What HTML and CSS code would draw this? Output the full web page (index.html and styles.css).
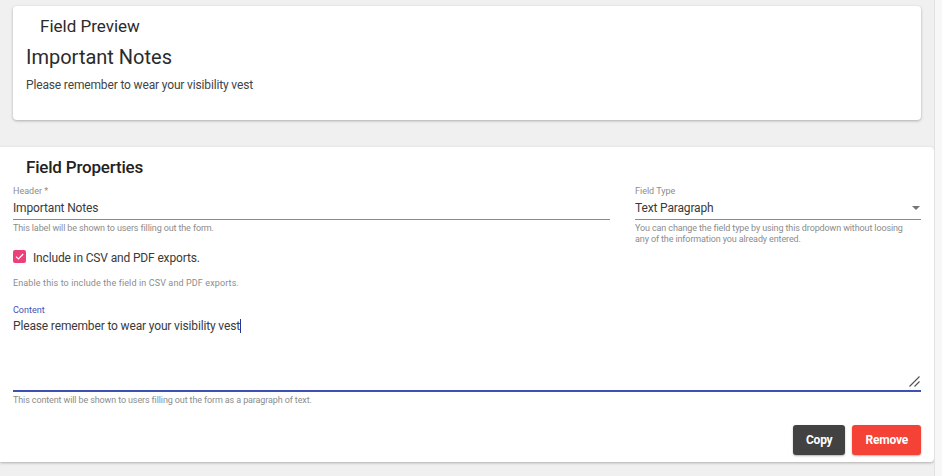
FILE: index.html
```html
<!DOCTYPE html>
<html>
<head>
<meta charset="utf-8">
<link rel="stylesheet" href="styles.css">
</head>
<body>
<div class="page">
  <section class="card preview">
    <h2 class="preview-title">Field Preview</h2>
    <h3 class="preview-header">Important Notes</h3>
    <p class="preview-text">Please remember to wear your visibility vest</p>
  </section>

  <section class="card props">
    <h2 class="props-title">Field Properties</h2>
    <div class="fields-row">
      <div class="field field-header">
        <label class="field-label">Header *</label>
        <div class="field-input">Important Notes</div>
        <div class="helper">This label will be shown to users filling out the form.</div>
      </div>
      <div class="field field-type">
        <label class="field-label">Field Type</label>
        <div class="field-input select">
          <span>Text Paragraph</span>
          <span class="arrow"></span>
        </div>
        <div class="helper type-helper">You can change the field type by using this dropdown without loosing any of the information you already entered.</div>
      </div>
    </div>

    <div class="check-row">
      <span class="checkbox">
        <svg width="13" height="13" viewBox="0 0 13 13"><path d="M3 6.6 L5.4 9 L10.2 4" fill="none" stroke="#fff" stroke-width="1.2"/></svg>
      </span>
      <span class="check-label">Include in CSV and PDF exports.</span>
    </div>
    <div class="helper check-helper">Enable this to include the field in CSV and PDF exports.</div>

    <label class="field-label content-label">Content</label>
    <div class="textarea">
      <span class="textarea-text">Please remember to wear your visibility vest</span><span class="caret"></span>
      <svg class="resizer" width="11" height="11" viewBox="0 0 11 11"><path d="M0.5 10.5 L10.5 0.5 M5.5 10.5 L10.5 5.5" stroke="#555" stroke-width="1.2" fill="none"/></svg>
    </div>
    <div class="helper content-helper">This content will be shown to users filling out the form as a paragraph of text.</div>

    <div class="actions">
      <button class="btn btn-copy">Copy</button>
      <button class="btn btn-remove">Remove</button>
    </div>
  </section>
</div>
</body>
</html>
```

FILE: styles.css
```css
html, body {
  margin: 0;
  padding: 0;
  background: #f7f7f7;
  font-family: Roboto, "Liberation Sans", Arial, sans-serif;
  color: #333;
}

.page {
  width: 934px;
  height: 476px;
  background: #f0f0f0;
  border-right: 1px solid #e2e2e2;
  overflow: hidden;
}

.card {
  background: #fff;
  box-sizing: border-box;
  box-shadow: 0 1px 3px rgba(0, 0, 0, 0.28);
}

.preview {
  margin: 6px 0 0 13px;
  width: 908px;
  height: 114px;
  border-radius: 4px;
  padding: 10px 13px 0;
}

.preview-title {
  margin: 0 0 0 14px;
  font-size: 17px;
  line-height: 20px;
  font-weight: 400;
  color: #2b2b2b;
}

.preview-header {
  margin: 9px 0 0;
  font-size: 20px;
  line-height: 24px;
  font-weight: 400;
  color: #2b2b2b;
}

.preview-text {
  margin: 8px 0 0;
  font-size: 12px;
  letter-spacing: -0.15px;
  line-height: 16px;
  color: #444;
}

.props {
  margin-top: 27px;
  width: 934px;
  height: 315px;
  border-radius: 0 4px 4px 0;
  padding: 10px 13px 0;
  display: flex;
  flex-direction: column;
}

.props-title {
  margin: 0 0 0 13px;
  font-size: 17px;
  line-height: 20px;
  font-weight: 500;
  letter-spacing: -0.2px;
  color: #222;
}

.fields-row {
  display: flex;
  gap: 25px;
  margin-top: 9px;
  align-items: flex-start;
}

.field-header { width: 597px; }
.field-type { width: 286px; }

.field-label {
  display: block;
  font-size: 9px;
  line-height: 11px;
  color: #8c8c8c;
}

.field-input {
  font-size: 12px;
  letter-spacing: -0.15px;
  line-height: 22px;
  color: #3a3a3a;
  border-bottom: 1px solid #8a8a8a;
}

.select {
  display: flex;
  align-items: center;
  justify-content: space-between;
}

.arrow {
  width: 0;
  height: 0;
  border-left: 4px solid transparent;
  border-right: 4px solid transparent;
  border-top: 4px solid #757575;
  margin-right: 1px;
}

.helper {
  margin-top: 3px;
  font-size: 9px;
  letter-spacing: -0.12px;
  line-height: 11px;
  color: #8c8c8c;
}

.type-helper {
  padding-right: 16px;
}

.check-row {
  display: flex;
  align-items: flex-start;
  gap: 7px;
  margin-top: 5px;
}

.checkbox {
  width: 13px;
  height: 13px;
  background: #ec407a;
  border-radius: 2px;
  display: block;
}

.checkbox svg { display: block; }

.check-label {
  font-size: 12px;
  letter-spacing: -0.15px;
  line-height: 16px;
  color: #3a3a3a;
}

.check-helper {
  margin-top: 12px;
  letter-spacing: 0.12px;
}

.content-label {
  margin-top: 16px;
  color: #3f51b5;
}

.textarea {
  position: relative;
  height: 74px;
  border-bottom: 2px solid #3f51b5;
  font-size: 12px;
  letter-spacing: -0.15px;
  line-height: 20px;
  color: #3a3a3a;
}

.caret {
  display: inline-block;
  width: 1px;
  height: 14px;
  background: #283593;
  vertical-align: -3px;
}

.resizer {
  position: absolute;
  right: 1px;
  bottom: 3px;
}

.content-helper { margin-top: 3px; }

.actions {
  display: flex;
  justify-content: flex-end;
  gap: 7px;
  margin-top: 19px;
}

.btn {
  height: 30px;
  border: none;
  border-radius: 3px;
  padding: 0 13px;
  font-family: Roboto, "Liberation Sans", Arial, sans-serif;
  font-size: 12px;
  font-weight: 700;
  letter-spacing: -0.2px;
  color: #fff;
  box-shadow: 0 1px 2px rgba(0, 0, 0, 0.3);
}

.btn-copy { background: #424242; }
.btn-remove { background: #f44336; }
```
